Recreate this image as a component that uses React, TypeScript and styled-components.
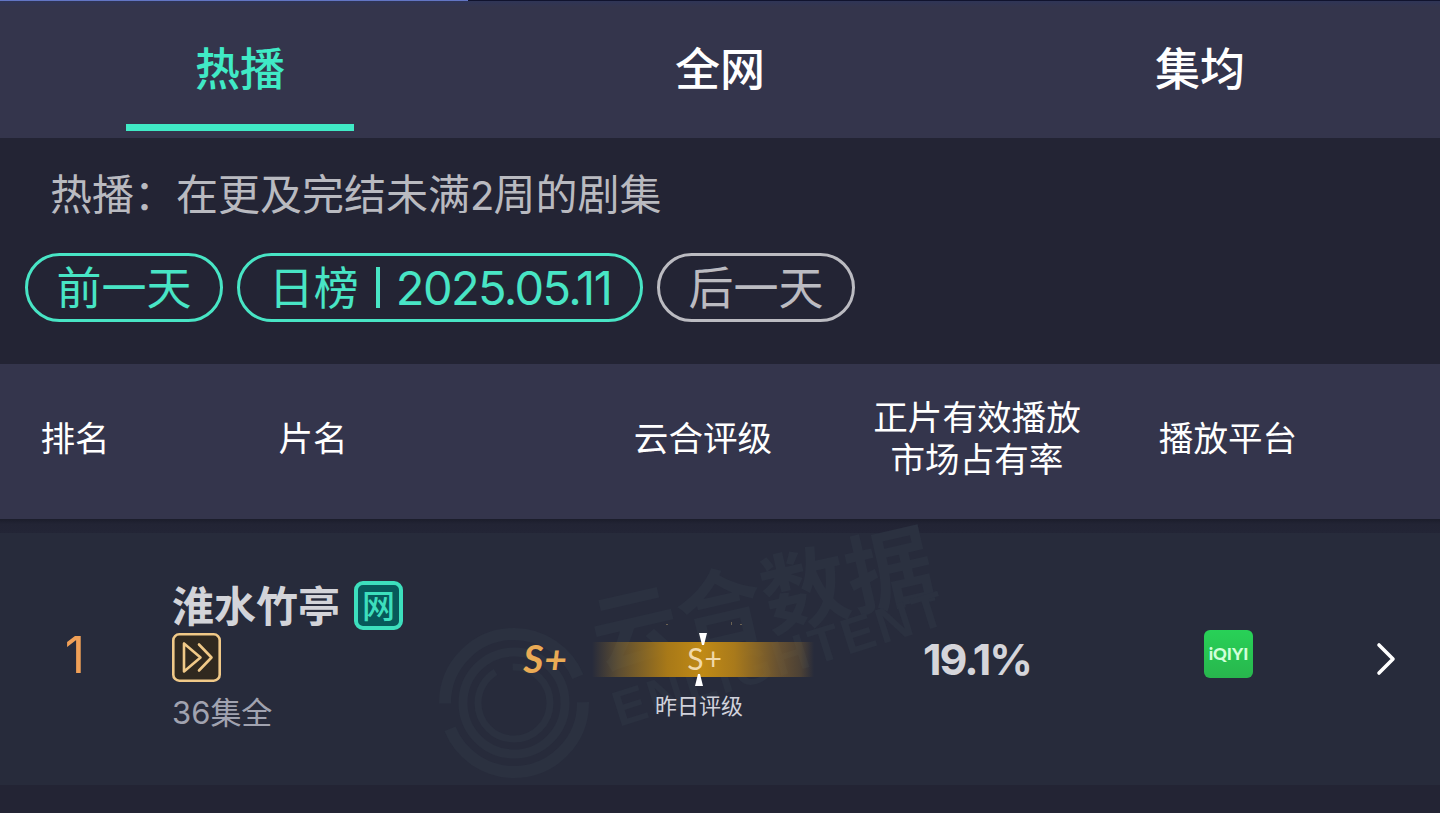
import styled, { createGlobalStyle } from "styled-components";

const GlobalStyle = createGlobalStyle`
  *, *::before, *::after {
    box-sizing: border-box;
  }
  body {
    margin: 0;
    background: #232434;
    overflow: hidden;
  }
`;

const Page = styled.div`
  width: 1440px;
  height: 813px;
  overflow: hidden;
  background: #232434;
  color: #ffffff;
  font-family: "Noto Sans CJK SC", sans-serif;
`;

const TopLine = styled.div`
  height: 1px;
  background: linear-gradient(to right, #6275c4 468px, #10132e 468px);
`;

const Tabs = styled.nav`
  display: grid;
  grid-template-columns: repeat(3, 1fr);
  height: 137px;
  background: linear-gradient(#2f3557, #34354c 6px, #34354c);
`;

const Tab = styled.a<{ $active?: boolean }>`
  display: flex;
  flex-direction: column;
  align-items: center;
  cursor: pointer;
  padding-top: 33px;
  font-size: 45px;
  line-height: 66px;
  font-weight: 500;
  color: ${(p) => (p.$active ? "#40eac6" : "#ffffff")};
`;

const TabBar = styled.span`
  width: 228px;
  height: 7px;
  margin-top: 24px;
  background: #40eac6;
`;

const Filter = styled.section`
  height: 226px;
  padding-top: 24px;
`;

const Hint = styled.p`
  margin: 0;
  padding-left: 50px;
  height: 60px;
  font-size: 42px;
  line-height: 60px;
  font-weight: 400;
  white-space: nowrap;
  color: #b9bac0;
`;

const HintNumber = styled.span`
  font-family: Inter, sans-serif;
  font-size: 40px;
  letter-spacing: -1px;
`;

const Pills = styled.div`
  display: flex;
  gap: 14px;
  margin-top: 31px;
  padding-left: 25px;
`;

const Pill = styled.button<{ $width: number; $muted?: boolean }>`
  display: flex;
  align-items: center;
  justify-content: center;
  width: ${(p) => p.$width}px;
  height: 69px;
  padding: 0 0 4px;
  background: transparent;
  border: 3px solid ${(p) => (p.$muted ? "#bbbbc1" : "#48e5c5")};
  border-radius: 35px;
  color: ${(p) => (p.$muted ? "#bbbbc1" : "#48e5c5")};
  font-family: inherit;
  font-size: 45px;
  font-weight: 400;
  line-height: 60px;
  white-space: nowrap;
`;

const Divider = styled.span`
  width: 4px;
  height: 41px;
  margin: 3px 16px 0 17px;
  background: #48e5c5;
`;

const DateText = styled.span`
  padding-top: 4px;
  font-family: Inter, sans-serif;
  font-size: 47px;
  letter-spacing: -1.6px;
`;

const columns = "150px 326px 118px 218px 330px 172px 126px";

const TableHead = styled.header`
  display: grid;
  grid-template-columns: ${columns};
  align-items: center;
  height: 155px;
  padding-bottom: 12px;
  background: #34354c;
  font-size: 34.6px;
  line-height: 42px;
  text-align: center;
`;

const HeadCell = styled.div<{ $wide?: boolean }>`
  white-space: nowrap;
  grid-column: ${(p) => (p.$wide ? "4" : "auto")};
`;

const Shade = styled.div`
  height: 14px;
  background: linear-gradient(#1b1d2b, #222434 5px, #232536);
`;

const Row = styled.article`
  position: relative;
  display: grid;
  grid-template-columns: ${columns};
  align-items: center;
  height: 252px;
  background: #272b3b;
`;

const Watermark = styled.svg`
  position: absolute;
  left: 430px;
  top: -14px;
  pointer-events: none;
  overflow: visible;
`;

const Rank = styled.div`
  position: relative;
  padding-bottom: 9px;
  font-family: Inter, sans-serif;
  font-size: 50px;
  line-height: 60px;
  text-align: center;
  color: #f0a057;
`;

const Show = styled.div`
  position: relative;
  align-self: start;
  padding: 41px 0 0 22px;
`;

const TitleLine = styled.div`
  display: flex;
  gap: 14px;
  height: 59px;
  white-space: nowrap;
`;

const Title = styled.h2`
  margin: 0;
  font-size: 42px;
  line-height: 60px;
  font-weight: 700;
  color: #d3d4d9;
`;

const NetBadge = styled.span`
  display: flex;
  align-items: center;
  justify-content: center;
  width: 49px;
  height: 49px;
  margin-top: 7px;
  padding-bottom: 4px;
  border: 4px solid #3ddfbd;
  border-radius: 9px;
  background: #07595a;
  color: #3ddfbd;
  font-size: 33px;
  line-height: 34px;
  font-weight: 500;
`;

const PlayIcon = styled.svg`
  display: block;
`;

const Episodes = styled.div`
  margin-top: 7px;
  font-size: 31px;
  line-height: 44px;
  font-weight: 400;
  color: #a1a3b0;
`;

const EpisodeCount = styled.span`
  font-family: Inter, sans-serif;
`;

const Grade = styled.div`
  position: relative;
  padding: 0 0 3px 21px;
  font-family: Lato, sans-serif;
  font-size: 39px;
  font-weight: 700;
  font-style: italic;
  letter-spacing: 1px;
  text-align: center;
  color: #eaab55;
`;

const Trend = styled.div`
  position: relative;
  display: flex;
  flex-direction: column;
  align-items: center;
  align-self: start;
  padding-top: 100px;
`;

const Arrow = styled.svg<{ $shift?: number }>`
  display: block;
  z-index: 1;
  margin-right: ${(p) => p.$shift || 0}px;
`;

const GradeBar = styled.div`
  display: flex;
  align-items: center;
  justify-content: center;
  width: 222px;
  height: 35px;
  margin: -3px 0;
  padding: 0 0 4px 4px;
  background: linear-gradient(
    to right,
    rgba(180, 130, 30, 0),
    rgba(155, 117, 40, 0.45) 12%,
    #a87918 34%,
    #c08a15 50%,
    #a97a1b 64%,
    rgba(145, 106, 43, 0.6) 84%,
    rgba(145, 106, 43, 0.35) 94%,
    rgba(145, 106, 43, 0)
  );
  font-family: Lato, sans-serif;
  font-size: 30px;
  letter-spacing: 1px;
  color: #f1d9ab;
`;

const TrendText = styled.div`
  padding-right: 8px;
  font-size: 22px;
  line-height: 36px;
  font-weight: 400;
  color: #d1d2dc;
`;

const Share = styled.div`
  position: relative;
  font-family: Inter, sans-serif;
  font-size: 43px;
  font-weight: 700;
  letter-spacing: -2px;
  text-align: center;
  color: #d5d5da;
`;

const Platform = styled.div`
  position: relative;
  display: flex;
  align-items: center;
  justify-content: center;
  justify-self: center;
  width: 49px;
  height: 48px;
  margin: 0 0 10px 1px;
  padding-bottom: 1px;
  border-radius: 6px;
  background: linear-gradient(#28d157, #28b64d);
  font-family: Lato, sans-serif;
  font-size: 17px;
  font-weight: 900;
  color: #d0ffd9;
`;

const Chevron = styled.svg`
  position: relative;
  display: block;
  margin-left: 62px;
`;

const App = () => {
  return (
    <Page>
      <GlobalStyle />
      <TopLine />
      <Tabs>
        <Tab $active>
          热播
          <TabBar />
        </Tab>
        <Tab>全网</Tab>
        <Tab>集均</Tab>
      </Tabs>
      <Filter>
        <Hint>
          热播：在更及完结未满<HintNumber>2</HintNumber>周的剧集
        </Hint>
        <Pills>
          <Pill $width={198}>前一天</Pill>
          <Pill $width={406}>
            日榜
            <Divider />
            <DateText>2025.05.11</DateText>
          </Pill>
          <Pill $width={198} $muted>
            后一天
          </Pill>
        </Pills>
      </Filter>
      <TableHead>
        <HeadCell>排名</HeadCell>
        <HeadCell>片名</HeadCell>
        <HeadCell $wide>云合评级</HeadCell>
        <HeadCell>
          正片有效播放
          <br />
          市场占有率
        </HeadCell>
        <HeadCell>播放平台</HeadCell>
      </TableHead>
      <Shade />
      <Row>
        <Watermark width="530" height="266" viewBox="0 0 530 266">
          <g fill="none" stroke="#2b3140">
            <circle cx="84" cy="184" r="69" strokeWidth="12" strokeDasharray="190 26" />
            <circle cx="84" cy="184" r="51" strokeWidth="9" />
            <circle cx="84" cy="184" r="36" strokeWidth="7" strokeDasharray="150 18" />
          </g>
          <g fill="#2b3140" fontWeight="700">
            <text
              transform="translate(170 151) rotate(-13)"
              fontSize="87"
              fontFamily="Noto Sans CJK SC"
            >
              云合数据
            </text>
            <text
              transform="translate(189 208) rotate(-17.5)"
              fontSize="50"
              fontFamily="Liberation Sans"
              textLength="345"
            >
              ENLIGHTENT
            </text>
          </g>
          <g fill="#6b6253">
            <rect x="236" y="105" width="2" height="1" />
            <rect x="301" y="103" width="1" height="3" />
            <rect x="310" y="105" width="2" height="1" />
          </g>
        </Watermark>
        <Rank>1</Rank>
        <Show>
          <TitleLine>
            <Title>淮水竹亭</Title>
            <NetBadge>网</NetBadge>
          </TitleLine>
          <PlayIcon
            width="49"
            height="49"
            viewBox="0 0 49 49"
            fill="none"
            stroke="#f0c988"
            strokeWidth="2.6"
            strokeLinejoin="round"
            strokeLinecap="round"
          >
            <rect x="1.3" y="1.3" width="46.4" height="46.4" rx="6" fill="#30291f" />
            <path d="M12 10.5v28L28.5 24.5z" />
            <path d="M27 11.5L39.5 24.5 27 37.5" />
          </PlayIcon>
          <Episodes>
            <EpisodeCount>36</EpisodeCount>集全
          </Episodes>
        </Show>
        <Grade>S+</Grade>
        <Trend>
          <Arrow width="8" height="12" viewBox="0 0 8 12">
            <path d="M0 0h8L5 12H3z" fill="#fff" />
          </Arrow>
          <GradeBar>S+</GradeBar>
          <Arrow $shift={8} width="8" height="12" viewBox="0 0 8 12">
            <path d="M3 0h2l3 12H0z" fill="#fff" />
          </Arrow>
          <TrendText>昨日评级</TrendText>
        </Trend>
        <Share>19.1%</Share>
        <Platform>iQIYI</Platform>
        <Chevron
          width="20"
          height="34"
          viewBox="0 0 20 34"
          fill="none"
          stroke="#fff"
          strokeWidth="3.6"
          strokeLinecap="round"
          strokeLinejoin="round"
        >
          <path d="M3 3L17 17 3 31" />
        </Chevron>
      </Row>
    </Page>
  );
};

export default App;
